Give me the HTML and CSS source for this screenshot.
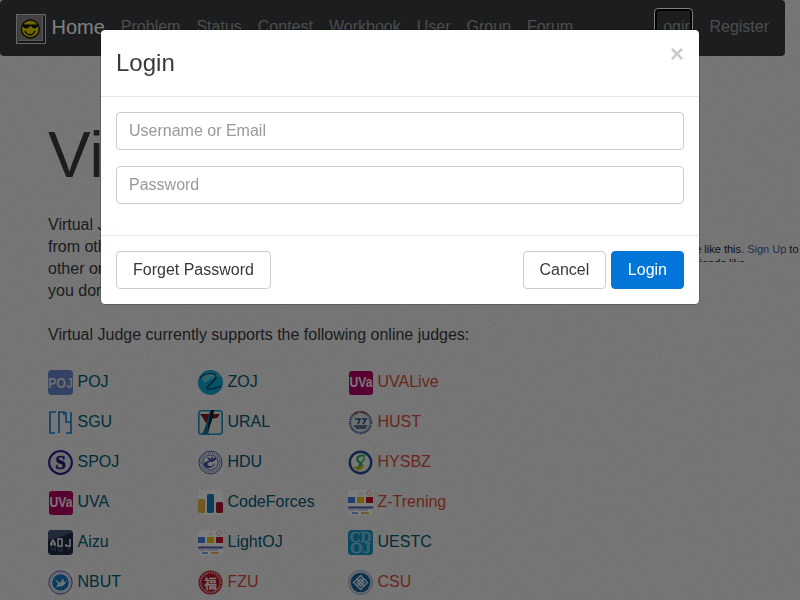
FILE: index.html
```html
<!DOCTYPE html>
<html lang="en">
<head>
<meta charset="utf-8">
<title>Virtual Judge</title>
<link rel="stylesheet" href="styles.css">
</head>
<body>
<svg class="grain" width="800" height="600" aria-hidden="true"><filter id="n"><feTurbulence type="fractalNoise" baseFrequency="0.5" numOctaves="2"/><feColorMatrix values="0 0 0 0 0  0 0 0 0 0  0 0 0 0 0  0.08 0 0 0 -0.02"/></filter><rect width="800" height="600" filter="url(#n)"/></svg>
<nav class="navbar">
  <svg class="brand-icon" viewBox="0 0 30 30"><path fill="#777" d="M0 0h30v30H0z"/><path fill="#aaa" d="M2 2h26v26H2z"/><path fill="#858585" d="M2 2h24v24H2z"/><path fill="none" stroke="#ccc" d="M.5.5h29v29H.5z"/><path d="M2 28h26V2" fill="none" stroke="#333" stroke-width="2"/><circle cx="14.3" cy="15" r="9" fill="#dfd000" stroke="#171700" stroke-width="1.4"/><path d="M6.500 10.500h15.500v1c-1 3.500-5 4-6.500 .8h-2c-1 3.200-6 2.700-7-.8z" fill="#111"/><path d="M9 17c2 5 8 5 10 0" fill="none" stroke="#111" stroke-width="1.3"/></svg>
  <a class="brand">Home</a>
  <a>Problem</a><a>Status</a><a>Contest</a><a>Workbook</a><a>User</a><a>Group</a><a>Forum</a>
  <a class="login focused">Login</a><a>Register</a>
</nav>
<main class="page">
  <section class="intro">
    <h1>Virtual Judge</h1>
    <p>Virtual Judge is not a real online judge. It can grab problems<br>from other regular online judges and simulate submissions to<br>other online judges. It aims to enable holding contests when<br>you don't have the test data.</p>
    <p>Virtual Judge currently supports the following online judges:</p>
    <div class="judges">
      <a><svg viewBox="0 0 25 25"><rect width="25" height="25" rx="4" fill="#6684c8"/><text x="12.5" y="18" textLength="25" lengthAdjust="spacingAndGlyphs" class="bold" font-size="14" fill="#ddd">POJ</text></svg>POJ</a>
      <a><svg viewBox="0 0 25 25"><circle cx="12.5" cy="12.5" r="12.5" fill="#0fa0cb"/><path d="M3 6c7-6 17-4 20 1-4-2-12 3-17 6z" fill="#58c6dd"/><path d="M2 8C8 2 19 2 18 7c-1 5-12 10-8 12 3 1 8-1 13-3" fill="none" stroke="#073c50" stroke-width="1.3"/></svg>ZOJ</a>
      <a class="down"><svg viewBox="0 0 25 25"><rect x="1" y="1" width="24" height="24" rx="3" fill="#b00060"/><text x="13" y="17" textLength="23" lengthAdjust="spacingAndGlyphs" class="bold" font-size="14" fill="#eee">UVa</text></svg>UVALive</a>

      <a><svg viewBox="0 0 25 25"><path d="M8 2H2v21h5M11 23V2h5v3M18 2v10h5M23 2v21h-5" fill="none" stroke="#187fd3" stroke-width="1.7"/></svg>SGU</a>
      <a><svg viewBox="0 0 25 25"><rect x=".8" y=".8" width="23.4" height="23.4" rx="3" fill="#e2e2dc" stroke="#168fc0" stroke-width="1.6"/><path d="M2 4h20l-3 4-7 1-4 4-3-5z" fill="#721723"/><path d="M12 1h4l-6 23H4c3-5 5-13 8-23z" fill="#176c9a"/><path d="M13 0h3l-2 10-4 10c0-8 2-14 3-20z" fill="#151b28"/></svg>URAL</a>
      <a class="down"><svg viewBox="0 0 25 25"><rect width="25" height="25" rx="4" fill="#eee"/><circle cx="12.5" cy="12.5" r="10.5" fill="#ddd" stroke="#4b6798" stroke-width="2.5" stroke-dasharray="1.5 .7"/><path d="M6 4q6-4 13 0" fill="none" stroke="#bd4b55" stroke-width="2" stroke-dasharray="2 1"/><path d="M7 9h5l-2 5m4-5h4l-3 5M6 16h13M8 18h10" fill="none" stroke="#255383" stroke-width="1.6"/></svg>HUST</a>

      <a><svg viewBox="0 0 25 25"><circle cx="12.5" cy="12.5" r="11.4" fill="#ddd" stroke="#241a87" stroke-width="2"/><text x="12.5" y="19" class="serif" font-size="19" fill="#211880" stroke="#211880" stroke-width=".6">S</text></svg>SPOJ</a>
      <a><svg viewBox="0 0 25 25"><rect width="25" height="25" rx="4" fill="#eee"/><circle cx="12.5" cy="12.5" r="11.5" fill="none" stroke="#4c5c9c"/><circle cx="12.5" cy="12.5" r="9.5" fill="none" stroke="#6572a9" stroke-width="1.5" stroke-dasharray="1 1"/><circle cx="12.5" cy="12.5" r="7.5" fill="none" stroke="#4c5c9c"/><path d="M9 7c2 0 3 1 3 3l2-4c1 2 1 3 0 4 2-3 4-3 5-2-1 2-3 3-5 4-4-1-6 3-3 4 3 1 5-1 5-3 3 4-8 8-10 2-1-3 3-4 5-4z" fill="#3750a0"/></svg>HDU</a>
      <a class="down"><svg viewBox="0 0 25 25"><rect width="25" height="25" rx="4" fill="#eee"/><circle cx="12.5" cy="12.500" r="10.7" fill="#eee" stroke="#264993" stroke-width="2.400"/><path d="M17 6c-7-2-10 3-6 6 4 2 4 8-3 6" fill="none" stroke="#26a85b" stroke-width="2.2"/><path d="M7 16c-1 5 7 5 8-1" fill="none" stroke="#dec82a" stroke-width="2"/><path d="M17 8l-7 9" stroke="#31a54a" stroke-width="1.500"/></svg>HYSBZ</a>

      <a><svg viewBox="0 0 25 25"><rect x="1" y="1" width="24" height="24" rx="3" fill="#b00060"/><text x="13" y="17" textLength="23" lengthAdjust="spacingAndGlyphs" class="bold" font-size="14" fill="#eee">UVa</text></svg>UVA</a>
      <a><svg viewBox="0 0 25 25"><rect width="25" height="25" rx="4" fill="#f8f8f8"/><rect y="9" width="7" height="14" rx="1.5" fill="#dfb340"/><rect x="9" y="4" width="7" height="19" rx="1.5" fill="#1680b5"/><rect x="18" y="12" width="7" height="11" rx="1.5" fill="#ad192d"/></svg>CodeForces</a>
      <a class="down"><svg viewBox="0 0 25 25"><use href="#bars"/></svg>Z-Trening</a>

      <a><svg viewBox="0 0 25 25"><rect width="25" height="25" rx="4" fill="#1f2945"/><path d="M0 10Q12 8 25 2V5Q25 0 20 0H4Q0 0 0 4z" fill="#44546f"/><path d="M3 16v-3l2-3 2 3v3M3 14h4M10 9h4v7h-4zM22 9v7h-4v-2" fill="none" stroke="#eee" stroke-width="1.5"/><path d="M4 17v4m3-4v4m4-4v4h3v-4m7 0v3" fill="none" stroke="#667088"/></svg>Aizu</a>
      <a><svg viewBox="0 0 25 25"><g id="bars"><rect width="25" height="25" rx="4" fill="#fafafa"/><path d="M0 7h7v6H0z" fill="#437ed7"/><path d="M9 7h7v6H9z" fill="#e7bd10"/><path d="M18 7h7v6h-7z" fill="#c21528"/><circle cx="21" cy="3" r="2.2" fill="none" stroke="#e5a4a4"/><path d="M11 5l1.5-2L14 5" fill="none" stroke="#e3c87c"/><path d="M0 17.5h25" stroke="#5963ad" stroke-width="2.2"/><path d="M1 20h6m2 0h11" stroke="#a0a5c8"/><path d="M4 23h6" stroke="#79a2e0" stroke-width="2"/><path d="M13 23h8" stroke="#ddb55c" stroke-width="2"/></g></svg>LightOJ</a>
      <a><svg viewBox="0 0 25 25"><rect width="25" height="25" rx="4" fill="#0d93c0"/><text x="12.5" y="11.500" textLength="22" lengthAdjust="spacingAndGlyphs" class="serif" font-size="15" fill="#70b8cf" stroke="#94d6e8" stroke-width=".4">CD</text><text x="12.5" y="23.200" textLength="21" lengthAdjust="spacingAndGlyphs" class="serif" font-size="15" fill="#70b8cf" stroke="#94d6e8" stroke-width=".4">OJ</text></svg>UESTC</a>

      <a><svg viewBox="0 0 25 25"><rect width="25" height="25" rx="4" fill="#f0f0f4"/><circle cx="12.5" cy="12.5" r="11.7" fill="#e4e4ee" stroke="#5156a5"/><circle cx="12.5" cy="12.5" r="9.8" fill="none" stroke="#999fc5" stroke-dasharray="1 1"/><circle cx="12.5" cy="12.5" r="8.3" fill="#1674c6"/><path d="M7 9l5 4 3-5 1 4 3-1-4 5-7 1 2-3z" fill="#cfe8f1"/></svg>NBUT</a>
      <a class="down"><svg viewBox="0 0 25 25"><circle cx="12.5" cy="12.5" r="12" fill="#ba1d2b"/><circle cx="12.5" cy="12.5" r="10" fill="none" stroke="#e2b2b2" stroke-width="2" stroke-dasharray="1.5 1"/><circle cx="12.5" cy="12.5" r="8.3" fill="#b71323"/><text x="12.5" y="17.5" class="cjk" font-size="13" fill="#eee">福</text></svg>FZU</a>
      <a class="down"><svg viewBox="0 0 25 25"><circle cx="12.5" cy="12.5" r="12" fill="#ccd5df" stroke="#517ba5" stroke-dasharray="1 1"/><circle cx="12.5" cy="12.5" r="9.800" fill="#176199"/><g fill="none" stroke="#e2edf2" stroke-width="1.3"><path d="M12.5 5.5l7 7-7 7-7-7zM9 9l7 7M16 9l-7 7"/><path d="M12.5 9l3.5 3.5-3.5 3.5L9 12.5z"/></g></svg>CSU</a>
    </div>
  </section>
  <aside class="like"><span>37 people like this. <a>Sign Up</a> to</span><span class="second">see what your friends like.</span></aside>
</main>
<div class="backdrop"></div>
<div class="modal">
  <header><h4>Login</h4><button class="close">×</button></header>
  <form class="fields"><input placeholder="Username or Email"><input type="password" placeholder="Password"></form>
  <footer><button class="btn forget">Forget Password</button><button class="btn cancel">Cancel</button><button class="btn primary">Login</button></footer>
</div>
</body>
</html>
```
FILE: styles.css
```css
* { box-sizing: border-box; }
body {
  margin: 0;
  height: 600px;
  overflow: hidden;
  background: #f0f0f0;
  color: #373a3c;
  font: 16px/22px "Liberation Sans", Arial, sans-serif;
}
.grain { position: absolute; top: 0; left: 0; z-index: -1; }
.navbar {
  width: 785px;
  height: 56px;
  padding: 0 16px;
  display: flex;
  align-items: center;
  gap: 16px;
  border-radius: 4px;
  background: #373a3c;
  color: #999b9c;
  line-height: 24px;
}
.navbar a { margin-top: -3px; }
.brand-icon { width: 30px; height: 30px; margin: 2px -10.5px 0 0; }
.navbar .brand { font-size: 20px; color: #fff; margin-top: -2px; }
.navbar .login { margin-left: auto; position: relative; }
.focused::after {
  content: "";
  position: absolute;
  inset: -7px 0 -6px;
  border: 1px solid #fff;
  border-radius: 4px;
  box-shadow: inset 0 0 0 2px #000;
}
.page { display: flex; justify-content: space-between; padding-left: 48px; }
.intro { flex: none; width: 480px; }
h1 { margin: 64px 0 24px; font-size: 64px; line-height: 70px; font-weight: 400; white-space: nowrap; }
p { margin: 0 0 22px; white-space: nowrap; }
.judges { display: grid; grid-template-columns: repeat(3, 150px); grid-auto-rows: 40px; margin-top: -6px; }
.judges a { display: flex; align-items: flex-start; gap: 4.5px; padding-top: 8px; color: #005a70; line-height: 23px; }
.judges .down { color: #d44c38; }
.judges svg { width: 25px; height: 25px; }
.judges text { text-anchor: middle; }
.bold { font-family: "Liberation Sans", sans-serif; font-weight: 700; }
.serif { font-family: "Liberation Serif", serif; font-weight: 700; }
.cjk { font-family: "Noto Sans CJK SC", sans-serif; font-weight: 700; }
.like {
  width: 170px;
  height: 20px;
  margin: 186px 1.5px 0 0;
  overflow: hidden;
  display: flex;
  flex-direction: column;
  align-items: flex-end;
  color: #1d2129;
  font-size: 11px;
  line-height: 14px;
  white-space: nowrap;
}
.like a { color: #465a98; }
.second { padding-right: 50px; }
.backdrop { position: fixed; inset: 0; background: rgba(0, 0, 0, .5); }
.modal {
  position: fixed;
  top: 29px;
  left: 100px;
  width: 600px;
  background: #fff;
  background-clip: padding-box;
  border: 1px solid rgba(0, 0, 0, .2);
  border-radius: 5px;
}
header { display: flex; justify-content: space-between; padding: 15px; border-bottom: 1px solid #e5e5e5; }
h4 { margin: 0; font-size: 24px; line-height: 36px; font-weight: 400; }
.close { height: 24px; margin-top: -3px; padding: 0; border: 0; background: none; color: #ccc; font: bold 24px/20px "Liberation Sans", sans-serif; }
.fields { margin: 0; padding: 15px 15px 31px; display: grid; gap: 16px; }
input { width: 100%; height: 38px; padding: 6px 12px; border: 1px solid #ccc; border-radius: 4px; font: 16px/24px "Liberation Sans", sans-serif; }
input::placeholder { color: #999; }
footer { display: flex; gap: 5px; padding: 15px; border-top: 1px solid #e5e5e5; }
.btn { height: 38px; padding: 0 16px; border: 1px solid #ccc; border-radius: 4px; background: #fff; color: #373a3c; font: 16px/24px "Liberation Sans", sans-serif; }
.forget { margin-right: auto; }
.cancel { width: 83px; padding: 0; }
.primary { background: #0275d8; border-color: #0275d8; color: #fff; }
```
